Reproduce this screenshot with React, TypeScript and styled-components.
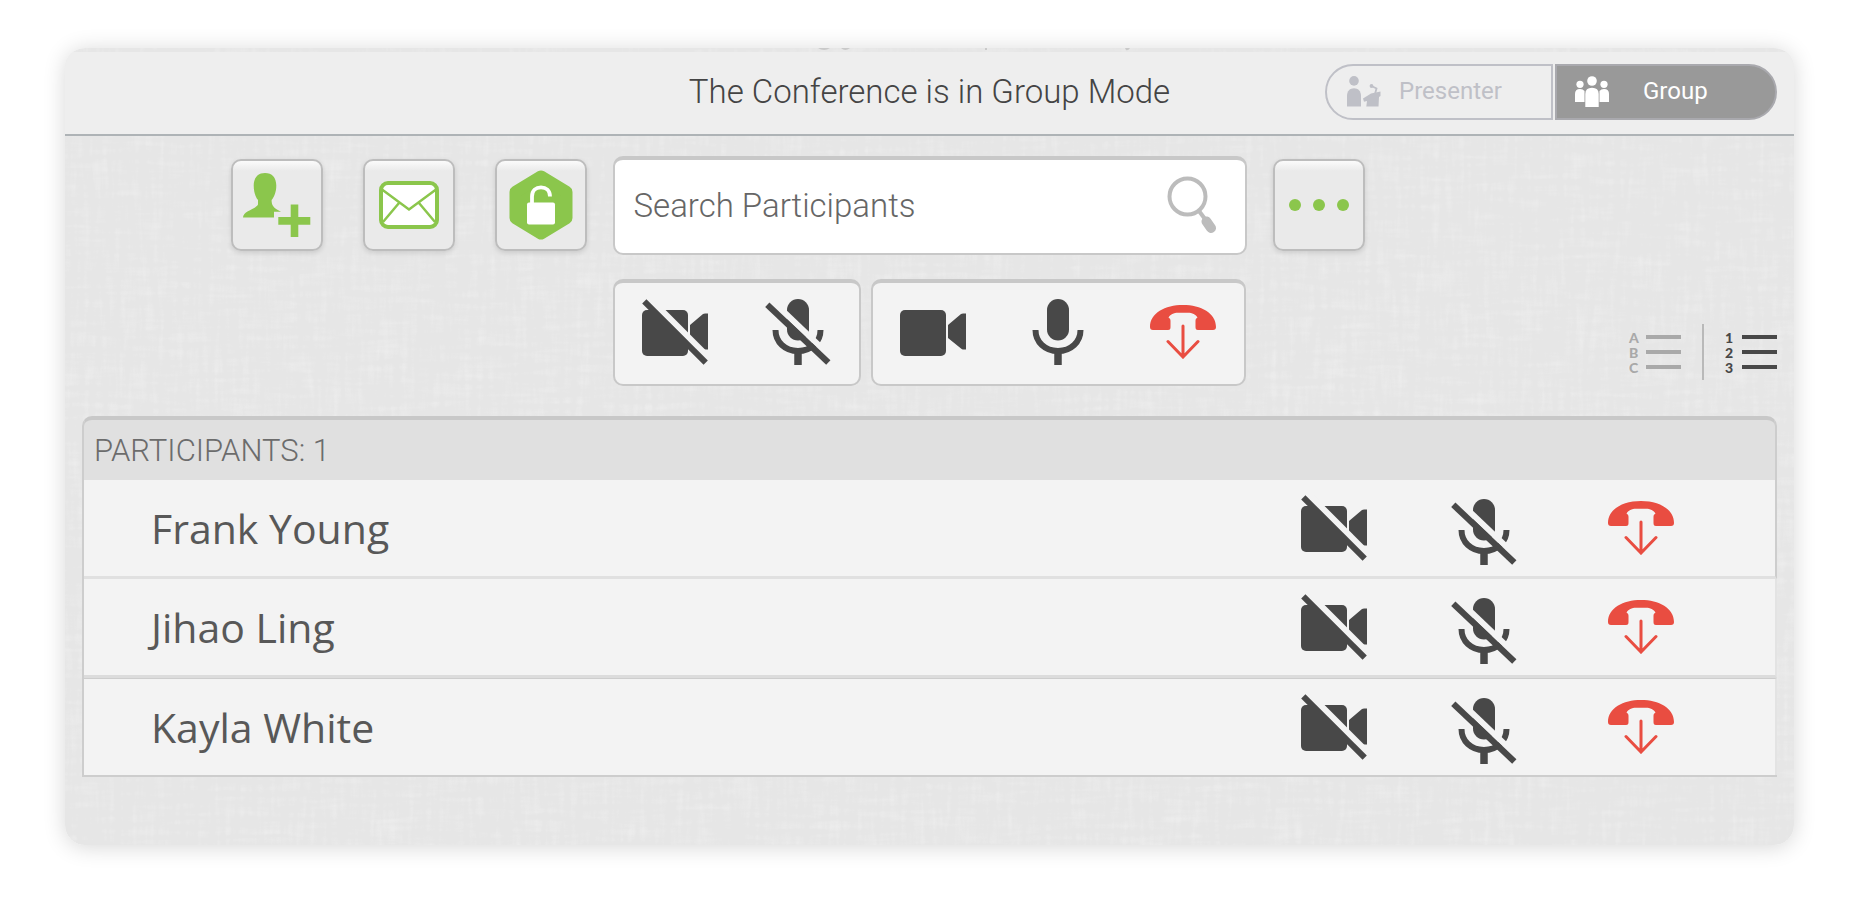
import React from "react";
import styled, { createGlobalStyle } from "styled-components";

const GREEN = "#8bc64c";
const DARK = "#484848";
const RED = "#e94d41";
const PANEL = "#f3f3f3";

const GlobalStyle = createGlobalStyle`
  * { box-sizing: border-box; }
  body { margin: 0; background: #fff; font-family: Roboto, "Liberation Sans", sans-serif; }
  button { font: inherit; color: inherit; padding: 0; border: 0; background: none; cursor: pointer; }
  svg { display: block; }
`;

const Page = styled.div`
  padding: 48px 66px 62px 65px;
`;

const Card = styled.main`
  position: relative;
  isolation: isolate;
  overflow: hidden;
  padding-bottom: 68px;
  border-radius: 20px;
  background: #e6e6e6;
`;

const CardShadow = styled.div`
  border-radius: 20px;
  box-shadow: 0 2px 22px rgba(0, 0, 0, 0.16);
`;

const Linen = styled.svg`
  position: absolute;
  inset: 0;
  z-index: -1;
  width: 100%;
  height: 100%;
`;

const TopStrip = styled.div`
  display: flex;
  justify-content: center;
  height: 4px;
`;

const Header = styled.header`
  display: grid;
  grid-template-columns: 1fr auto 1fr;
  align-items: center;
  height: 84px;
  padding: 0 17px 2px;
  background: #eee;
  border-bottom: 2px solid #aeb3b6;
`;

const Title = styled.h1`
  grid-column: 2;
  margin: 0;
  font-size: 33px;
  line-height: 40px;
  font-weight: 300;
  color: #444;
`;

const ModeSwitch = styled.div`
  display: flex;
  gap: 2px;
  justify-self: end;
`;

const ModeButton = styled.button<{ $active?: boolean }>`
  display: flex;
  align-items: center;
  gap: ${(p) => (p.$active ? 34 : 18)}px;
  width: ${(p) => (p.$active ? 222 : 228)}px;
  height: 56px;
  padding: 0 20px 2px ${(p) => (p.$active ? 18 : 20)}px;
  border: 2px solid ${(p) => (p.$active ? "#a9a9ae" : "#bfc0c7")};
  border-radius: ${(p) => (p.$active ? "0 28px 28px 0" : "28px 0 0 28px")};
  background: ${(p) => (p.$active ? "#999" : "transparent")};
  color: ${(p) => (p.$active ? "#fff" : "#bfc0c7")};
  font-size: 24px;
  line-height: 32px;
`;

const Toolbar = styled.div`
  display: grid;
  grid-template-columns: 1fr 634px 1fr;
  gap: 24px 26px;
  align-items: center;
  padding: 20px 17px 30px;
`;

const Actions = styled.div`
  display: flex;
  justify-content: flex-end;
  gap: 40px;
`;

const SquareButton = styled.button`
  display: flex;
  align-items: center;
  justify-content: center;
  width: 92px;
  height: 92px;
  margin-bottom: 2px;
  border: 2px solid #bdbdbd;
  border-radius: 10px;
  background: linear-gradient(#fbfbfb, #eaeaea 10px);
  box-shadow: 0 2px 5px rgba(0, 0, 0, 0.12);
`;

const SearchBox = styled.label`
  display: flex;
  align-items: center;
  height: 99px;
  padding: 0 28px 3px 19px;
  border: 2px solid #c8c8c8;
  border-top-width: 4px;
  border-radius: 10px;
  background: #fff;
`;

const SearchInput = styled.input`
  flex: 1;
  min-width: 0;
  height: 48px;
  padding: 0;
  border: 0;
  outline: 0;
  background: none;
  font: 300 33px/40px Roboto, "Liberation Sans", sans-serif;
  color: #444;
  &::placeholder { color: #666; opacity: 1; }
`;

const ControlGroups = styled.div`
  grid-column: 2;
  display: flex;
  gap: 10px;
`;

const ControlGroup = styled.div<{ $width: number }>`
  display: flex;
  align-items: center;
  justify-content: space-between;
  width: ${(p) => p.$width}px;
  height: 107px;
  padding: 0 28px 4px 27px;
  border: 2px solid #c8c8c8;
  border-top-width: 4px;
  border-radius: 10px;
  background: ${PANEL};
`;

const SortSwitch = styled.div`
  display: flex;
  align-items: center;
  align-self: end;
  justify-self: end;
  gap: 21px;
  padding-bottom: 6px;
`;

const SortButton = styled.button<{ $active?: boolean }>`
  display: grid;
  width: 52px;
  color: ${(p) => (p.$active ? DARK : "#a9a9a9")};
`;

const SortLine = styled.span`
  display: flex;
  align-items: center;
  justify-content: space-between;
  font: 900 14px/15px Lato, "Liberation Sans", sans-serif;
  &::after {
    content: "";
    width: 35px;
    height: 4px;
    background: currentColor;
  }
`;

const Divider = styled.span`
  width: 2px;
  height: 56px;
  background: #b9b9b9;
`;

const Participants = styled.section`
  margin: 0 17px;
`;

const ListHeading = styled.h2`
  height: 64px;
  margin: 0;
  padding: 11px 10px;
  border: 2px solid #cdcdcd;
  border-top: 4px solid #c8c8c8;
  border-bottom: 0;
  border-radius: 10px 10px 0 0;
  background: #e0e0e0;
  font-size: 31px;
  line-height: 40px;
  font-weight: 300;
  color: #6c6c6c;
`;

const List = styled.table`
  width: 100%;
  table-layout: fixed;
  border-spacing: 0;
  border-left: 2px solid #cdcdcd;
  border-bottom: 2px solid #cdcdcd;
`;

const Row = styled.tr`
  height: 99px;
  & > * { border-right: 0 solid #e3e3e3; border-bottom: 3px solid #e0e0e0; }
  & > :last-child { border-right-width: 2px; }
  &:first-child > :last-child { border-right-color: #cdcdcd; }
  &:last-child { height: 97px; }
  &:last-child > * { border-top: 1px solid #cdcdcd; border-bottom: 0; }
  &:nth-child(2) > * { border-bottom-color: #dcdcdc; }
`;

const Name = styled.th`
  padding: 0 0 0 67px;
  background: ${PANEL};
  text-align: left;
  font: 400 41px/56px "Open Sans", sans-serif;
  color: #585858;
`;

const Cell = styled.td<{ $top?: number }>`
  padding: ${(p) => p.$top || 0}px 0 0;
  background: ${PANEL};
  & > button { display: block; margin: 0 auto; }
`;

const Col = styled.col<{ $width?: number }>`
  width: ${(p) => (p.$width ? `${p.$width}px` : "auto")};
`;

const CameraShape = () => (
  <>
    <rect x="0" y="11" width="46" height="46" rx="5" fill={DARK} />
    <path d="M48 26 L61 15 Q62 14.500 63 14.500 H66 V50.500 H63 Q62 50.500 61 49.500 L48 39 Z" fill={DARK} />
  </>
);

const Camera = () => (
  <svg width="66" height="66" viewBox="0 0 66 66" aria-hidden="true">
    <CameraShape />
  </svg>
);

const CameraOff = () => (
  <svg width="66" height="66" viewBox="0 0 66 66" aria-hidden="true">
    <CameraShape />
    <path d="M6 -2 L76 68" stroke={PANEL} strokeWidth="6.500" />
    <path d="M2.300 2.300 L63.700 63.700" stroke={DARK} strokeWidth="6" />
  </svg>
);

const MicShape = () => (
  <>
    <rect x="22" y="0" width="22" height="41.500" rx="11" fill={DARK} />
    <path d="M10.500 31 C10.500 43 20 52 33 52 C46 52 55.500 43 55.500 31" fill="none" stroke={DARK} strokeWidth="6" />
    <path d="M33 52 V66" stroke={DARK} strokeWidth="7.500" />
  </>
);

const Mic = () => (
  <svg width="66" height="66" viewBox="0 0 66 66" aria-hidden="true">
    <MicShape />
  </svg>
);

const MicOff = () => (
  <svg width="66" height="66" viewBox="0 0 66 66" aria-hidden="true">
    <MicShape />
    <path d="M10.500 5 L72 63.500" stroke={PANEL} strokeWidth="6" />
    <path d="M2.300 5.800 L63.300 63.500" stroke={DARK} strokeWidth="6.200" />
  </svg>
);

const HangUp = () => (
  <svg width="66" height="54" viewBox="0 0 66 54" aria-hidden="true">
    <path
      fill={RED}
      d="M0 22 C0 8 15 0 33 0 C51 0 66 8 66 22 C66 24 65 25 63 25 H48 C46 25 45.500 24 45.500 22 V16 C45.500 14 46 13.500 47.500 12.500 C46 9.500 42 7.700 38 7.700 H28 C24 7.700 20 9.500 18.500 12.500 C20 13.500 20.500 14 20.500 16 V22 C20.500 24 20 25 18 25 H3 C1 25 0 24 0 22 Z"
    />
    <path d="M33 21 V51 M18 36.500 L33 52 L48 36.500" fill="none" stroke={RED} strokeWidth="3" strokeLinecap="round" />
  </svg>
);

const AddPerson = () => (
  <svg width="68" height="64" viewBox="0 0 68 64" fill={GREEN} aria-hidden="true">
    <path d="M22 0 C29 0 33.300 4.500 33.300 12.500 C33.300 19 31 24.500 28.600 27 C28.600 32 30 35 38 38.700 H31 V44.500 H0 C0 38 13 36 15 31.500 V27 C12.500 24 10.700 19 10.700 12.500 C10.700 4.500 15 0 22 0 Z" />
    <path d="M47.700 31.500 H55.300 V44 H67.300 V51.700 H55.300 V64 H47.700 V51.700 H35.300 V44 H47.700 Z" />
  </svg>
);

const Envelope = () => (
  <svg width="60" height="48" viewBox="0 0 60 48" fill="none" stroke={GREEN} aria-hidden="true">
    <rect x="2" y="2" width="56" height="44" rx="7" fill="#fff" strokeWidth="4" />
    <path d="M3 8.500 L30 28.500 L57 8.500 M20 22 L4 41 M40 22 L56 41" strokeWidth="2.500" />
  </svg>
);

const Unlocked = () => (
  <svg width="64" height="70" viewBox="0 0 64 70" fill="none" aria-hidden="true">
    <path
      d="M32 6.500 L57.500 22 V48 L32 63.500 L6.500 48 V22 Z"
      fill={GREEN}
      stroke={GREEN}
      strokeWidth="12"
      strokeLinejoin="round"
    />
    <rect x="18" y="32.500" width="28" height="22" rx="2" fill="#fff" />
    <path d="M23 34 V26.500 C23 20.500 27 17.300 32 17.300 C37 17.300 41 20.500 41 26.500" stroke="#fff" strokeWidth="3.800" />
  </svg>
);

const Dots = () => (
  <svg width="60" height="14" viewBox="0 0 60 14" fill={GREEN} aria-hidden="true">
    <circle cx="6" cy="7" r="6" />
    <circle cx="30" cy="7" r="6" />
    <circle cx="54" cy="7" r="6" />
  </svg>
);

const Magnifier = () => (
  <svg width="50" height="58" viewBox="0 0 50 58" fill="none" stroke="#bcbcbc" aria-hidden="true">
    <circle cx="20.500" cy="20.500" r="18" strokeWidth="4" />
    <path d="M32 35 L38 43" strokeWidth="4" />
    <path d="M39.500 45.500 L44 52" strokeWidth="10" strokeLinecap="round" />
  </svg>
);

const PresenterIcon = () => (
  <svg width="34" height="31" viewBox="0 0 34 31" fill="#bfc0c7" aria-hidden="true">
    <circle cx="7" cy="4.900" r="4.800" />
    <path d="M0 30.500 V20 C0 15 3 12.300 7 12.300 S14 15 14 20 V30.500 Z" />
    <path d="M16 22.500 L24 17.500 L33.500 15.500 V20 L32 21 L31.500 30.500 H19.300 L20 25 L17 25.800 Z" />
    <path d="M24.500 10 L29.500 12.500 L28 18" fill="none" stroke="#bfc0c7" strokeWidth="1.800" />
    <circle cx="24.500" cy="10" r="1.900" />
  </svg>
);

const GroupIcon = () => (
  <svg width="34" height="31" viewBox="0 0 34 31" fill="#fff" aria-hidden="true">
    <circle cx="5" cy="8.300" r="3.600" />
    <circle cx="29" cy="8.300" r="3.600" />
    <circle cx="17" cy="5" r="4.800" />
    <path d="M0 26 V18 Q0 13 5 13 Q8 13 9.500 15 V26 Z" />
    <path d="M34 26 V18 Q34 13 29 13 Q26 13 24.500 15 V26 Z" />
    <path d="M10.300 31 V18 Q10.300 11.700 17 11.700 Q23.700 11.700 23.700 18 V31 Z" />
  </svg>
);

const people = ["Frank Young", "Jihao Ling", "Kayla White"];

export default function App() {
  return (
    <Page>
      <GlobalStyle />
      <CardShadow>
        <Card>
          <Linen aria-hidden="true">
            <filter id="weave" x="0" y="0" width="100%" height="100%">
              <feTurbulence type="fractalNoise" baseFrequency="0.020 0.160" numOctaves="3" seed="4" result="across" />
              <feTurbulence type="fractalNoise" baseFrequency="0.160 0.020" numOctaves="3" seed="9" result="down" />
              <feComposite in="across" in2="down" operator="arithmetic" k2="0.5" k3="0.5" />
              <feColorMatrix values="0 0 0 0 1  0 0 0 0 1  0 0 0 0 1  3 0 0 0 -1.400" />
            </filter>
            <rect width="100%" height="100%" filter="url(#weave)" opacity="0.25" />
          </Linen>

          <TopStrip>
            <svg width="400" height="4" viewBox="0 0 400 4" fill="#c9c9c9" aria-hidden="true">
              <path d="M88 0 H100 Q94 4 88 0 Z M111 0 H120 Q115 4 111 0 Z M255 0 H257 V2 H255 Z" />
              <path d="M395 0 H400 Q398 3 396 2 Z" />
            </svg>
          </TopStrip>

          <Header>
            <Title>The Conference is in Group Mode</Title>
            <ModeSwitch>
              <ModeButton type="button" aria-pressed="false">
                <PresenterIcon />
                Presenter
              </ModeButton>
              <ModeButton type="button" aria-pressed="true" $active>
                <GroupIcon />
                Group
              </ModeButton>
            </ModeSwitch>
          </Header>

          <Toolbar>
            <Actions>
              <SquareButton type="button" aria-label="Add participant"><AddPerson /></SquareButton>
              <SquareButton type="button" aria-label="Send invitation"><Envelope /></SquareButton>
              <SquareButton type="button" aria-label="Lock conference"><Unlocked /></SquareButton>
            </Actions>
            <SearchBox>
              <SearchInput type="text" placeholder="Search Participants" aria-label="Search Participants" />
              <Magnifier />
            </SearchBox>
            <SquareButton type="button" aria-label="More options"><Dots /></SquareButton>

            <ControlGroups>
              <ControlGroup $width={248}>
                <button type="button" aria-label="Stop all cameras"><CameraOff /></button>
                <button type="button" aria-label="Mute everyone"><MicOff /></button>
              </ControlGroup>
              <ControlGroup $width={375}>
                <button type="button" aria-label="Start all cameras"><Camera /></button>
                <button type="button" aria-label="Unmute everyone"><Mic /></button>
                <button type="button" aria-label="Disconnect everyone"><HangUp /></button>
              </ControlGroup>
            </ControlGroups>
            <SortSwitch>
              <SortButton type="button" aria-label="Sort by name">
                <SortLine>A</SortLine>
                <SortLine>B</SortLine>
                <SortLine>C</SortLine>
              </SortButton>
              <Divider />
              <SortButton type="button" aria-label="Sort by order joined" $active>
                <SortLine>1</SortLine>
                <SortLine>2</SortLine>
                <SortLine>3</SortLine>
              </SortButton>
            </SortSwitch>
          </Toolbar>

          <Participants>
            <ListHeading>PARTICIPANTS: 1</ListHeading>
            <List aria-label="Participants">
              <colgroup>
                <Col />
                <Col $width={142} />
                <Col $width={157} />
                <Col $width={157} />
                <Col $width={58} />
              </colgroup>
              <tbody>
                {people.map((name) => (
                  <Row key={name}>
                    <Name scope="row">{name}</Name>
                    <Cell><button type="button" aria-label={`Stop camera of ${name}`}><CameraOff /></button></Cell>
                    <Cell $top={8}><button type="button" aria-label={`Mute ${name}`}><MicOff /></button></Cell>
                    <Cell><button type="button" aria-label={`Disconnect ${name}`}><HangUp /></button></Cell>
                    <Cell />
                  </Row>
                ))}
              </tbody>
            </List>
          </Participants>
        </Card>
      </CardShadow>
    </Page>
  );
}
